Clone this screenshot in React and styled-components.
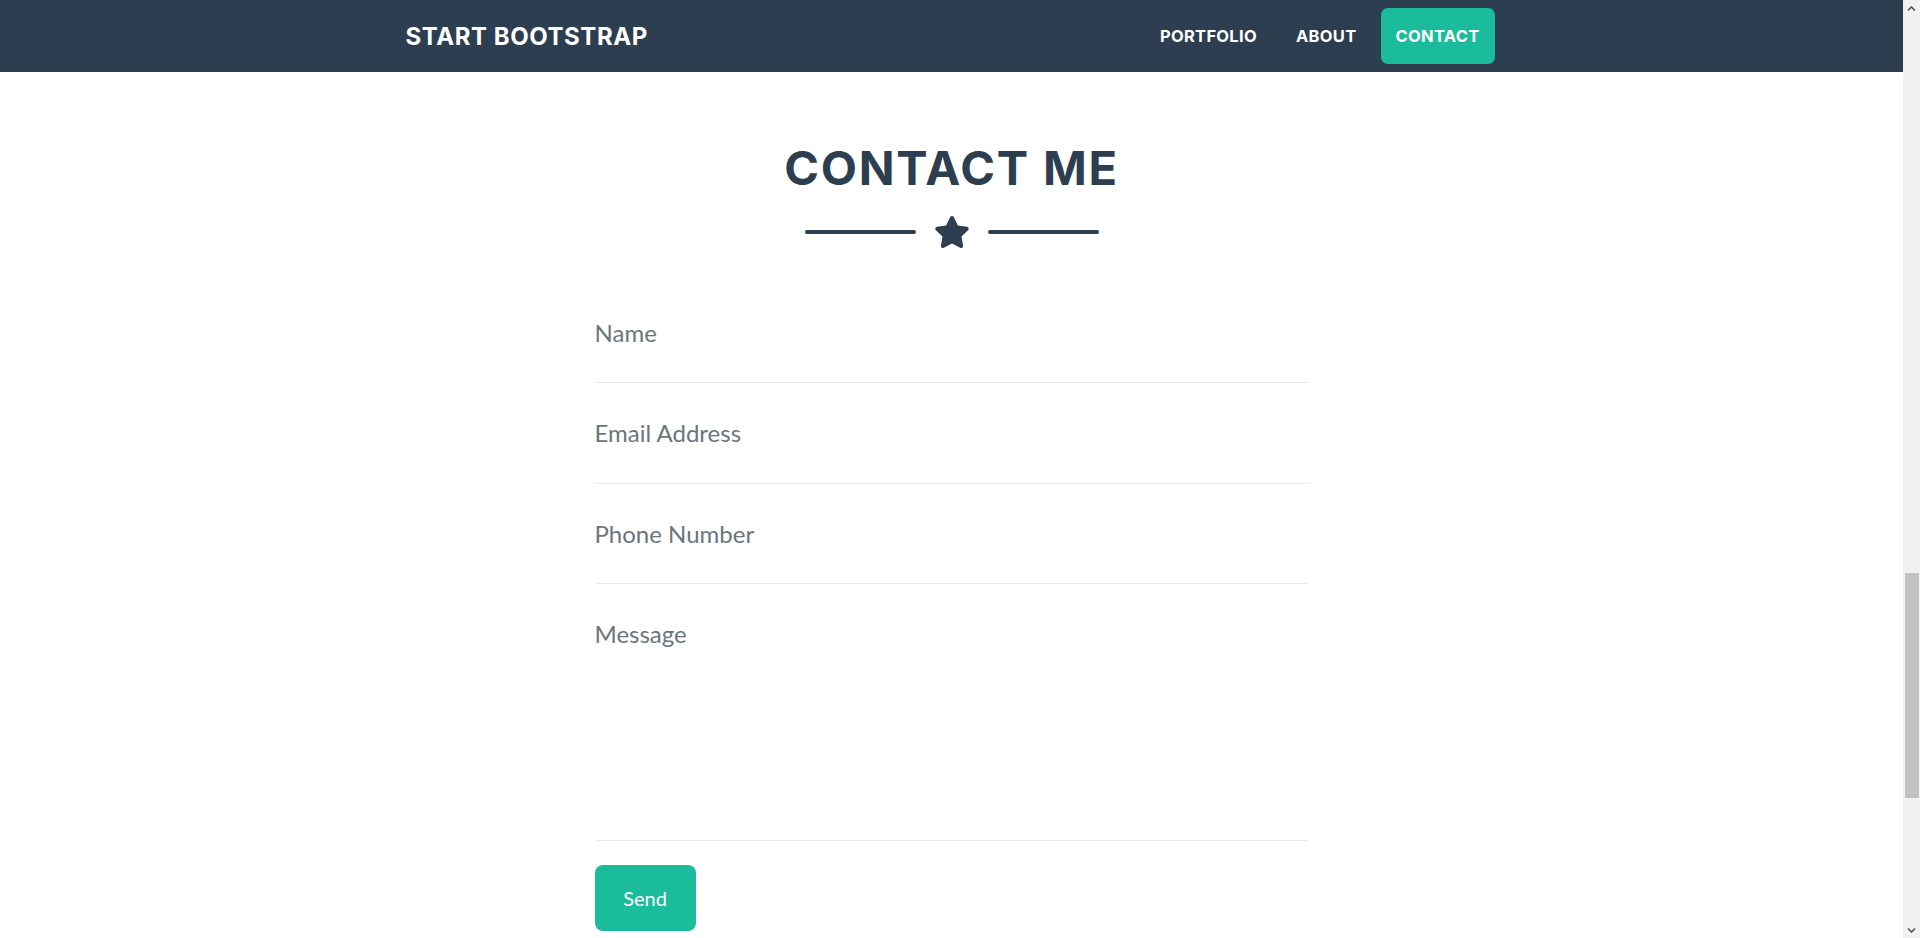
import React from 'react'
import styled, { createGlobalStyle } from 'styled-components'
import { FaStar } from 'react-icons/fa'

const GlobalStyle = createGlobalStyle`
  html, body {
    margin: 0;
    padding: 0;
    overflow: hidden;
    background: #fff;
  }
  * { box-sizing: border-box; }
`

const Page = styled.div`
  display: flex;
  width: 100vw;
  height: 100vh;
`

const Main = styled.div`
  flex: 1;
  display: flex;
  flex-direction: column;
  min-width: 0;
`

const Navbar = styled.nav`
  height: 72px;
  background-color: #2c3e50;
  flex-shrink: 0;
`

const NavInner = styled.div`
  max-width: 1092px;
  height: 100%;
  margin: 0 auto;
  padding-right: 3px;
  display: flex;
  align-items: center;
  justify-content: space-between;
`

const Brand = styled.a`
  font-family: Inter, "Open Sans", sans-serif;
  font-weight: 700;
  font-size: 24px;
  color: #fff;
  text-decoration: none;
  letter-spacing: 0.55px;
`

const NavList = styled.ul`
  display: flex;
  align-items: center;
  gap: 9px;
  list-style: none;
  margin: 0;
  padding: 0;
`

const NavLink = styled.a`
  display: flex;
  align-items: center;
  height: 56px;
  padding: 0 15px;
  border-radius: 7px;
  font-family: Inter, "Open Sans", sans-serif;
  font-weight: 700;
  font-size: 16.5px;
  letter-spacing: 0.3px;
  color: #fff;
  text-decoration: none;
  background-color: ${p => (p.$active ? '#1abc9c' : 'transparent')};
`

const Section = styled.section`
  flex: 1;
  display: flex;
  flex-direction: column;
  align-items: center;
  padding-top: 68px;
`

const Heading = styled.h2`
  margin: 0;
  font-family: Inter, "Open Sans", sans-serif;
  font-weight: 700;
  font-size: 47px;
  line-height: 1.2;
  color: #2c3e50;
  letter-spacing: 1.8px;
`

const Divider = styled.div`
  display: flex;
  align-items: center;
  gap: 18px;
  margin-top: 18px;
  color: #2c3e50;
`

const DividerLine = styled.span`
  width: 111px;
  height: 4px;
  border-radius: 2px;
  background-color: #2c3e50;
`

const Form = styled.form`
  width: 714px;
  margin-top: 32px;
  display: flex;
  flex-direction: column;
`

const Field = styled.input`
  height: 100.7px;
  padding: 0;
  border: none;
  border-bottom: 1px solid #e6e9ec;
  outline: none;
  font-family: Lato, sans-serif;
  font-size: 24px;
  color: #212529;
  background: transparent;

  &::placeholder {
    color: #6c757d;
    opacity: 1;
  }
`

const Message = styled.textarea`
  height: 257px;
  padding: 36px 0 0;
  border: none;
  border-bottom: 1px solid #e6e9ec;
  outline: none;
  resize: none;
  font-family: Lato, sans-serif;
  font-size: 24px;
  line-height: 1.2;
  color: #212529;
  background: transparent;

  &::placeholder {
    color: #6c757d;
    opacity: 1;
  }
`

const SendButton = styled.button`
  align-self: flex-start;
  margin-top: 24px;
  width: 101px;
  height: 66px;
  border: none;
  border-radius: 8px;
  background-color: #1abc9c;
  color: #fff;
  font-family: Lato, sans-serif;
  font-size: 20px;
  cursor: pointer;
`

const Scrollbar = styled.div`
  width: 17px;
  flex-shrink: 0;
  display: flex;
  flex-direction: column;
  background-color: #f1f1f1;
`

const ScrollArrow = styled.div`
  height: 17px;
  display: flex;
  align-items: center;
  justify-content: center;
`

const ScrollTrack = styled.div`
  flex: 1;
  display: flex;
  flex-direction: column;
  padding-top: 556px;
`

const ScrollThumb = styled.div`
  height: 225px;
  margin: 0 1px 0 2px;
  background-color: #c1c1c1;
`

const Chevron = ({ down }) => (
  <svg width="9" height="6" viewBox="0 0 9 6">
    <path
      d={down ? 'M1 1.5 L4.5 5 L8 1.5' : 'M1 4.5 L4.5 1 L8 4.5'}
      fill="none"
      stroke="#505050"
      strokeWidth="1.6"
    />
  </svg>
)

const App = () => {
  return (
    <>
      <GlobalStyle />
      <Page>
        <Main>
          <Navbar>
            <NavInner>
              <Brand href="#page-top">START BOOTSTRAP</Brand>
              <NavList>
                <li><NavLink href="#portfolio">PORTFOLIO</NavLink></li>
                <li><NavLink href="#about">ABOUT</NavLink></li>
                <li><NavLink href="#contact" $active>CONTACT</NavLink></li>
              </NavList>
            </NavInner>
          </Navbar>
          <Section id="contact">
            <Heading>CONTACT ME</Heading>
            <Divider>
              <DividerLine />
              <FaStar size={36} />
              <DividerLine />
            </Divider>
            <Form onSubmit={e => e.preventDefault()}>
              <Field type="text" placeholder="Name" />
              <Field type="email" placeholder="Email Address" />
              <Field type="tel" placeholder="Phone Number" />
              <Message placeholder="Message" />
              <SendButton type="submit">Send</SendButton>
            </Form>
          </Section>
        </Main>
        <Scrollbar>
          <ScrollArrow><Chevron /></ScrollArrow>
          <ScrollTrack><ScrollThumb /></ScrollTrack>
          <ScrollArrow><Chevron down /></ScrollArrow>
        </Scrollbar>
      </Page>
    </>
  )
}

export default App
